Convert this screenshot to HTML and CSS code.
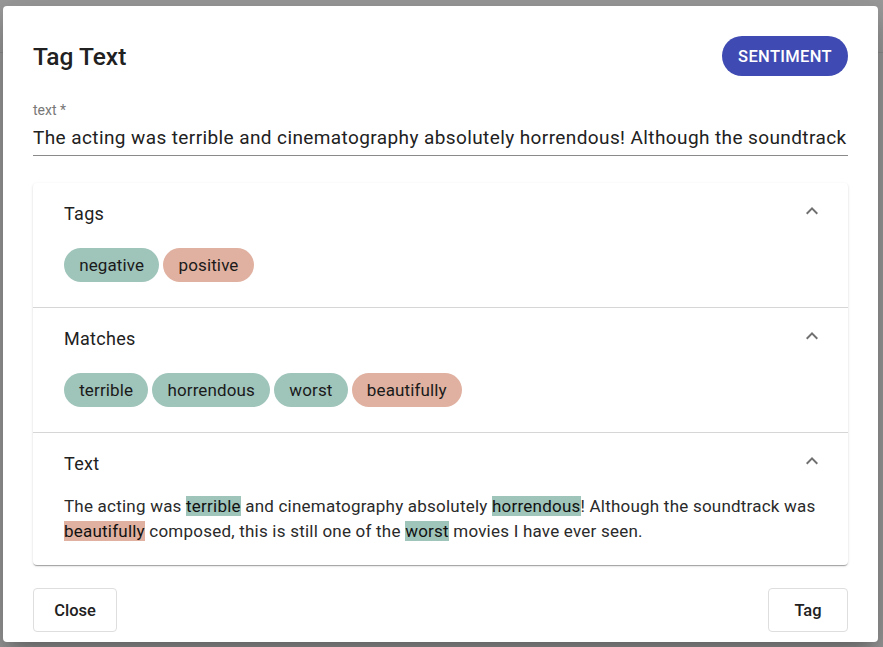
FILE: index.html
```html
<!DOCTYPE html>
<html>
<head>
<meta charset="utf-8">
<link rel="stylesheet" href="styles.css">
</head>
<body>
<div class="backdrop-line"></div>
<div class="dialog">
  <div class="dialog-head">
    <h1 class="title">Tag Text</h1>
    <button class="btn-sentiment">SENTIMENT</button>
  </div>
  <div class="field">
    <div class="field-label">text *</div>
    <div class="field-input">The acting was terrible and cinematography absolutely horrendous! Although the soundtrack was beautifully composed, this is still one of the worst movies I have ever seen.</div>
  </div>
  <div class="card">
    <section class="panel">
      <div class="panel-head"><span>Tags</span>
        <svg class="chev" viewBox="0 0 24 24" width="24" height="24"><path d="M12 8l-6 6 1.41 1.41L12 10.83l4.59 4.58L18 14z"/></svg>
      </div>
      <div class="chips">
        <span class="chip neg">negative</span><span class="chip pos">positive</span>
      </div>
    </section>
    <section class="panel">
      <div class="panel-head"><span>Matches</span>
        <svg class="chev" viewBox="0 0 24 24" width="24" height="24"><path d="M12 8l-6 6 1.41 1.41L12 10.83l4.59 4.58L18 14z"/></svg>
      </div>
      <div class="chips">
        <span class="chip neg">terrible</span><span class="chip neg">horrendous</span><span class="chip neg">worst</span><span class="chip pos">beautifully</span>
      </div>
    </section>
    <section class="panel last">
      <div class="panel-head"><span>Text</span>
        <svg class="chev" viewBox="0 0 24 24" width="24" height="24"><path d="M12 8l-6 6 1.41 1.41L12 10.83l4.59 4.58L18 14z"/></svg>
      </div>
      <p class="body-text">The acting was <mark class="hl neg">terrible</mark> and cinematography absolutely <mark class="hl neg">horrendous</mark>! Although the soundtrack was <mark class="hl pos">beautifully</mark> composed, this is still one of the <mark class="hl neg">worst</mark> movies I have ever seen.</p>
    </section>
  </div>
  <div class="actions">
    <button class="btn">Close</button>
    <button class="btn btn-tag">Tag</button>
  </div>
</div>
</body>
</html>
```

FILE: styles.css
```css
* { box-sizing: border-box; }
html, body { margin: 0; height: 100%; }
body {
  background: #9c9c9c;
  font-family: Roboto, "Noto Sans", sans-serif;
  color: rgba(0,0,0,0.87);
  padding: 6px 5px 5px 3px;
  position: relative;
}
.backdrop-line {
  position: absolute;
  left: 0; right: 0; top: 52px;
  height: 1px;
  background: #8f8f8f;
}
.dialog {
  position: relative;
  background: #fff;
  border-radius: 4px;
  height: 636px;
  padding: 30px 30px 10px 30px;
  box-shadow: 0 11px 15px -7px rgba(0,0,0,0.2), 0 24px 38px 3px rgba(0,0,0,0.14), 0 9px 46px 8px rgba(0,0,0,0.12);
}
.dialog-head {
  display: flex;
  justify-content: space-between;
  align-items: center;
  height: 40px;
}
.title {
  margin: 0;
  font-size: 24.5px;
  font-weight: 500;
  color: #212121;
}
.btn-sentiment {
  height: 40px;
  padding: 0 16px;
  border: none;
  border-radius: 20px;
  background: #3f4bb2;
  color: #fff;
  font-family: Roboto, sans-serif;
  font-size: 16.5px;
  font-weight: 500;
  letter-spacing: 0.35px;
}
.field { margin-top: 25px; }
.field-label {
  font-size: 14px;
  line-height: 18px;
  color: #777;
}
.field-input {
  height: 37px;
  padding-top: 1px;
  font-size: 19px;
  letter-spacing: 0.4px;
  line-height: 36px;
  white-space: nowrap;
  overflow: hidden;
  color: #212121;
  border-bottom: 1px solid #8a8a8a;
}
.card {
  margin-top: 27px;
  border-radius: 4px;
  background: #fff;
  box-shadow: 0 2px 1px -1px rgba(0,0,0,0.2), 0 1px 1px 0 rgba(0,0,0,0.14), 0 1px 3px 0 rgba(0,0,0,0.12);
}
.panel {
  padding: 0 24px 25px 31px;
  border-bottom: 1px solid #d6d6d6;
}
.panel.last { border-bottom: none; padding-bottom: 21px; }
.panel-head {
  height: 60px;
  display: flex;
  justify-content: space-between;
  align-items: center;
  font-size: 18px;
  letter-spacing: 0.3px;
  color: #212121;
}
.panel-head span { padding-top: 1px; }
.chev { fill: #707070; margin-top: -4px; }
.chips {
  margin-top: 5px;
  display: flex;
  gap: 4px;
}
.chip {
  height: 34px;
  line-height: 34px;
  padding: 0 15.2px;
  border-radius: 17px;
  font-size: 17px;
  letter-spacing: 0.12px;
  color: #1a1a1a;
}
.chip.neg, .hl.neg { background: #9fc4ba; }
.chip.pos, .hl.pos { background: #e0b1a0; }
.body-text {
  margin: 1px 0 0 0;
  font-size: 17px;
  letter-spacing: 0.22px;
  line-height: 25px;
  color: #2a2a2a;
}
.hl { color: #111; }
.actions {
  margin-top: 23px;
  display: flex;
  justify-content: space-between;
}
.btn {
  height: 44px;
  width: 84px;
  background: #fff;
  border: 1px solid #dedede;
  border-radius: 4px;
  font-family: Roboto, sans-serif;
  font-size: 16.5px;
  font-weight: 500;
  color: #212121;
}
.btn-tag { width: 80px; }
```
